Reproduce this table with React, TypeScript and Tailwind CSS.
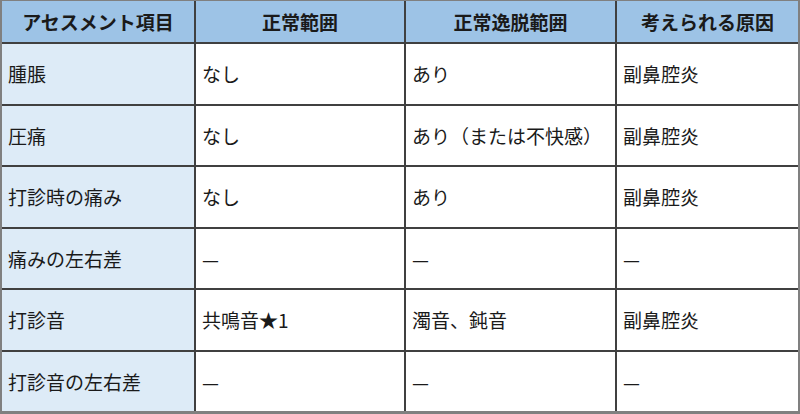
const headers = ["アセスメント項目", "正常範囲", "正常逸脱範囲", "考えられる原因"]

const rows: string[][] = [
  ["腫脹", "なし", "あり", "副鼻腔炎"],
  ["圧痛", "なし", "あり（または不快感）", "副鼻腔炎"],
  ["打診時の痛み", "なし", "あり", "副鼻腔炎"],
  ["痛みの左右差", "—", "—", "—"],
  ["打診音", "共鳴音★1", "濁音、鈍音", "副鼻腔炎"],
  ["打診音の左右差", "—", "—", "—"],
]

export default function App() {
  return (
    <div
      className="w-[800px] h-[414px] bg-[#808080] pt-px pl-[2px] pr-[2px] pb-[3px] text-[#1a1a1a]"
      style={{ fontFamily: '"Noto Sans CJK JP", "Noto Sans", sans-serif' }}
    >
      <div className="grid h-full grid-cols-[192px_208px_209px_181px] grid-rows-[41px_repeat(6,1fr)] gap-[2px] bg-[#404040]">
        {headers.map((h) => (
          <div
            key={h}
            className="flex items-center justify-center bg-[#9dc3e6] text-[19px] font-bold leading-none"
          >
            {h}
          </div>
        ))}
        {rows.map((row) =>
          row.map((cell, i) => (
            <div
              key={row[0] + i}
              className={`flex items-center pl-[6px] text-[19px] leading-none ${
                i === 0 ? "bg-[#ddebf7]" : "bg-white"
              }`}
            >
              {cell}
            </div>
          ))
        )}
      </div>
    </div>
  )
}
